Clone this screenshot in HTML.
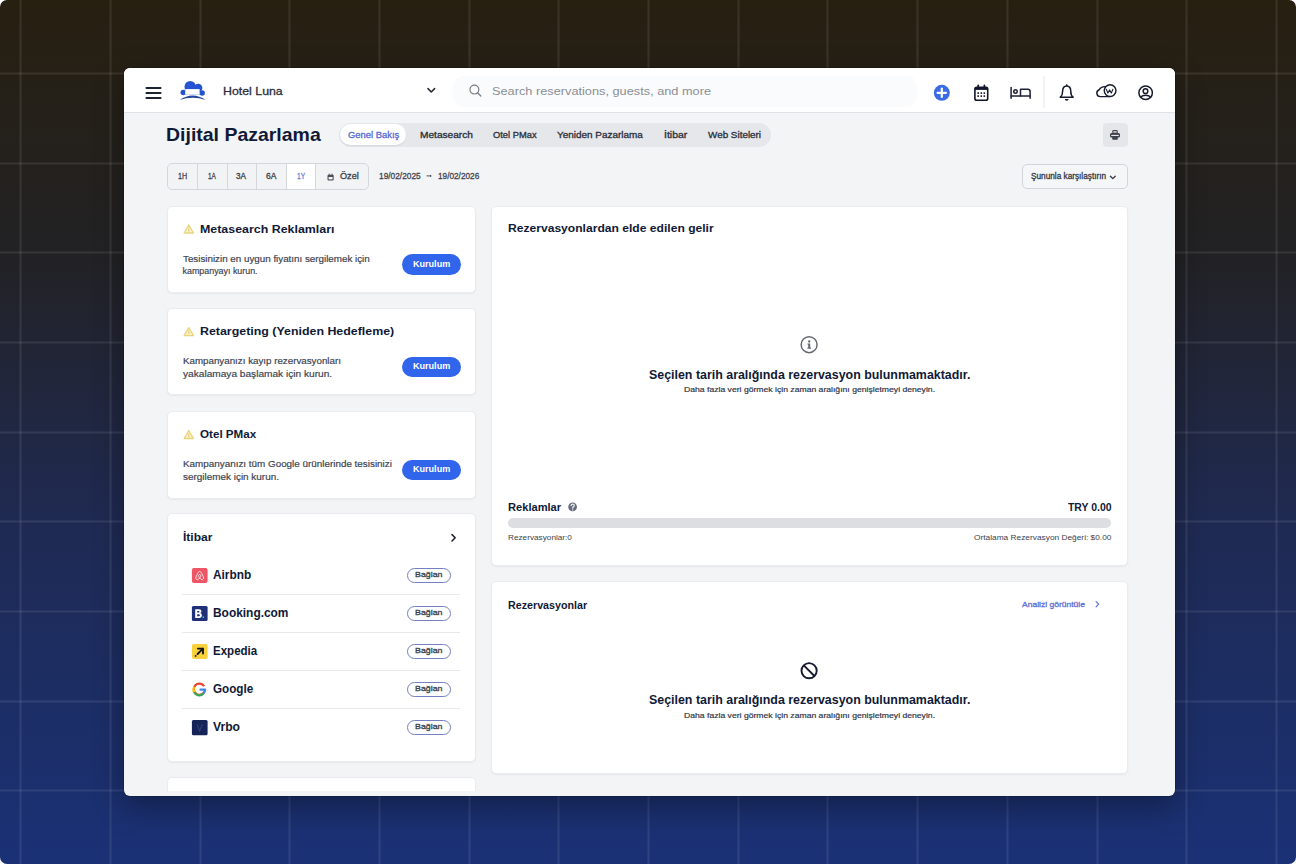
<!DOCTYPE html>
<html><head><meta charset="utf-8">
<style>
*{margin:0;padding:0;box-sizing:border-box}
html,body{width:1296px;height:864px;background:#fff;overflow:hidden}
body{font-family:"Liberation Sans",sans-serif;position:relative}
#bg{position:absolute;left:0;top:0;width:1296px;height:864px;border-radius:7px;overflow:hidden;
 background:linear-gradient(180deg,#271f10 0%,#222225 30%,#1f2a52 60%,#1a3176 100%)}
.gh{position:absolute;left:0;width:1296px;height:3px;background:linear-gradient(180deg,rgba(255,255,255,.025),rgba(255,255,255,.09) 50%,rgba(255,255,255,.025))}
.gv{position:absolute;top:0;height:864px;width:3px;background:linear-gradient(90deg,rgba(255,255,255,.025),rgba(255,255,255,.09) 50%,rgba(255,255,255,.025))}
#win{position:absolute;left:124px;top:68px;width:1051px;height:728px;border-radius:6px;overflow:hidden;background:#f3f4f6;
 box-shadow:0 0 0 1px rgba(0,0,0,.15),0 10px 30px rgba(0,0,0,.35)}
#L{position:absolute;left:-124px;top:-68px;width:1296px;height:864px}
.a{position:absolute}
.t{position:absolute;line-height:0;white-space:nowrap;transform-origin:0 0}
.card{position:absolute;background:#fff;border:1px solid #e9ebee;border-radius:5px;box-shadow:0 1px 2px rgba(0,0,0,.05)}
.kur{position:absolute;background:#3165ec;border-radius:11px;width:58.5px;height:20.5px;left:402px}
.bag{position:absolute;left:406.5px;width:44px;height:15.2px;border:1.25px solid #7480c2;border-radius:8px;background:#fff}
.div{position:absolute;left:182px;width:278px;height:1px;background:#e8e9ec}
svg{position:absolute;overflow:visible}
</style></head><body>
<div id="bg">
<div class="gh" style="top:72.10px"></div>
<div class="gh" style="top:161.75px"></div>
<div class="gh" style="top:251.40px"></div>
<div class="gh" style="top:341.05px"></div>
<div class="gh" style="top:430.70px"></div>
<div class="gh" style="top:520.35px"></div>
<div class="gh" style="top:610.00px"></div>
<div class="gh" style="top:699.65px"></div>
<div class="gh" style="top:789.30px"></div>
<div class="gv" style="left:19.10px"></div>
<div class="gv" style="left:108.80px"></div>
<div class="gv" style="left:198.50px"></div>
<div class="gv" style="left:288.20px"></div>
<div class="gv" style="left:377.90px"></div>
<div class="gv" style="left:467.60px"></div>
<div class="gv" style="left:557.30px"></div>
<div class="gv" style="left:647.00px"></div>
<div class="gv" style="left:736.70px"></div>
<div class="gv" style="left:826.40px"></div>
<div class="gv" style="left:916.10px"></div>
<div class="gv" style="left:1005.80px"></div>
<div class="gv" style="left:1095.50px"></div>
<div class="gv" style="left:1185.20px"></div>
<div class="gv" style="left:1274.90px"></div><div id="win"><div id="L">
<!-- header -->
<div class="a" style="left:124px;top:68px;width:1051px;height:45px;background:#fff;border-bottom:1px solid #dfe1e5"></div>
<svg style="left:0;top:0" width="1" height="1">
 <g stroke="#1d2233" stroke-width="2.1" stroke-linecap="round">
  <line x1="146.5" y1="88" x2="160.5" y2="88"/><line x1="146.5" y1="93" x2="160.5" y2="93"/><line x1="146.5" y1="98" x2="160.5" y2="98"/>
 </g>
 <!-- logo -->
 <g fill="#2553d2">
  <circle cx="190.2" cy="86.5" r="5.6"/><circle cx="198.2" cy="88" r="4.2"/>
  <circle cx="183.2" cy="92.5" r="2.7"/><circle cx="202.2" cy="93" r="2.7"/>
  <rect x="184.8" y="86" width="15" height="9"/>
 </g>
 <rect x="185.2" y="89.1" width="14.4" height="5.7" fill="#fff"/>
 <path d="M179.6 99.9 Q192.7 90.9 205.8 99.9 Q192.7 95.6 179.6 99.9Z" fill="#27489e"/>
 <!-- chevron -->
 <polyline points="428,88.6 431.3,92 434.6,88.6" fill="none" stroke="#2a2d36" stroke-width="1.6" stroke-linecap="round" stroke-linejoin="round"/>
</svg>
<div class="a" style="left:453px;top:76px;width:464px;height:31px;border-radius:11px;background:#fafbfc"></div>
<svg style="left:0;top:0" width="1" height="1">
 <circle cx="474.4" cy="89.6" r="4.4" fill="none" stroke="#7a7d85" stroke-width="1.2"/>
 <line x1="477.6" y1="92.8" x2="480.8" y2="96" stroke="#7a7d85" stroke-width="1.3" stroke-linecap="round"/>
 <!-- plus -->
 <circle cx="941.8" cy="92.8" r="8" fill="#3a6ce8"/>
 <g stroke="#fff" stroke-width="2.2" stroke-linecap="round"><line x1="937.6" y1="92.8" x2="946" y2="92.8"/><line x1="941.8" y1="88.6" x2="941.8" y2="97"/></g>
 <!-- calendar -->
 <g fill="none" stroke="#11152b" stroke-width="1.6">
  <rect x="974.9" y="87.3" width="12.8" height="12.9" rx="1.8"/>
 </g>
 <rect x="974.9" y="87.3" width="12.8" height="2.6" fill="#11152b"/>
 <g stroke="#11152b" stroke-width="1.6" stroke-linecap="round"><line x1="978.2" y1="85.3" x2="978.2" y2="88"/><line x1="984.4" y1="85.3" x2="984.4" y2="88"/></g>
 <g fill="#11152b">
  <rect x="977.4" y="92.3" width="1.6" height="1.6"/><rect x="980.5" y="92.3" width="1.6" height="1.6"/><rect x="983.5" y="92.3" width="1.6" height="1.6"/>
  <rect x="977.4" y="95.3" width="1.6" height="1.6"/><rect x="980.5" y="95.3" width="1.6" height="1.6"/><rect x="983.5" y="95.3" width="1.6" height="1.6"/>
 </g>
 <!-- bed -->
 <g fill="none" stroke="#1d2135" stroke-width="1.5" stroke-linecap="round" stroke-linejoin="round">
  <line x1="1011.1" y1="87.5" x2="1011.1" y2="98.3"/>
  <line x1="1011.1" y1="96.1" x2="1030.1" y2="96.1"/>
  <path d="M1030.1 98.3 V91.6 Q1030.1 89.3 1027.8 89.3 H1020.5 V96.1"/>
  <circle cx="1015.5" cy="91.5" r="1.75"/>
 </g>
 <line x1="1044" y1="76" x2="1044" y2="108" stroke="#e6e7ea" stroke-width="1"/>
 <!-- bell -->
 <path d="M1060.3 97.2 Q1062.6 95.4 1062.6 91.4 Q1062.6 85.9 1066.7 85.9 Q1070.8 85.9 1070.8 91.4 Q1070.8 95.4 1073.1 97.2 Z" fill="none" stroke="#151a2c" stroke-width="1.5" stroke-linejoin="round"/>
 <circle cx="1066.7" cy="85.2" r="0.9" fill="#151a2c"/>
 <path d="M1064.8 99.1 H1068.6 A1.9 1.7 0 0 1 1064.8 99.1Z" fill="#151a2c"/>
 <!-- cloud W -->
 <g fill="none" stroke="#151a2c" stroke-width="1.45" stroke-linejoin="round" stroke-linecap="round">
  <path d="M1110 96.6 H1100.2 A3.5 3.5 0 0 1 1099.2 89.8 Q1100.6 86.8 1105.1 86.6"/>
  <circle cx="1110.1" cy="90.6" r="5.85"/>
  <path d="M1106.3 89.3 L1107.9 93.1 L1109.6 89.9 L1111.3 93.1 L1112.9 89.3" stroke-width="1.1"/>
 </g>
 <!-- user -->
 <g fill="none" stroke="#151a2c" stroke-width="1.5">
  <circle cx="1145.65" cy="92.75" r="6.75"/>
  <circle cx="1145.5" cy="91.15" r="2.3"/>
  <path d="M1140.3 97.9 Q1141.8 95.3 1145.6 95.3 Q1149.4 95.3 1150.9 97.9"/>
 </g>
</svg>
<!-- tabs -->
<div class="a" style="left:338.5px;top:122.5px;width:432px;height:24px;border-radius:12px;background:#e5e7eb"></div>
<div class="a" style="left:339.7px;top:124.4px;width:66.8px;height:21px;border-radius:10.5px;background:#fff;box-shadow:0 1px 2px rgba(0,0,0,.08)"></div>
<!-- print -->
<div class="a" style="left:1102.7px;top:122.7px;width:25.2px;height:24.6px;border-radius:4px;background:#e4e6ea"></div>
<svg style="left:0;top:0" width="1" height="1">
 <g fill="#3d414d">
  <rect x="1112.3" y="130" width="5.4" height="4" rx="1.2"/>
  <rect x="1110" y="133" width="10" height="4.6" rx="1.5"/>
  <rect x="1112.2" y="136" width="5.6" height="3.7" rx="0.8"/>
 </g>
 <rect x="1111.2" y="134.9" width="7.6" height="1.1" fill="#e4e6ea"/>
 <rect x="1113.3" y="131.2" width="3.4" height="1.4" fill="#e4e6ea"/>
</svg>
<!-- period group -->
<div class="a" style="left:166.8px;top:163.2px;width:201.8px;height:26.6px;border:1px solid #d3d6db;border-radius:5px;background:#f2f3f5;overflow:hidden">
 <div class="a" style="left:118.5px;top:0;width:29px;height:25px;background:#fff"></div>
 <div class="a" style="left:29.6px;top:0;width:1px;height:25px;background:#d3d6db"></div>
 <div class="a" style="left:59.6px;top:0;width:1px;height:25px;background:#d3d6db"></div>
 <div class="a" style="left:88.6px;top:0;width:1px;height:25px;background:#d3d6db"></div>
 <div class="a" style="left:118.4px;top:0;width:1px;height:25px;background:#d3d6db"></div>
 <div class="a" style="left:147.6px;top:0;width:1px;height:25px;background:#d3d6db"></div>
</div>
<svg style="left:0;top:0" width="1" height="1">
 <rect x="327.5" y="174.8" width="6.2" height="5.7" rx="1" fill="#4a4e5a"/>
 <rect x="328.6" y="177" width="4" height="2.4" fill="#f2f3f5"/>
 <g stroke="#4a4e5a" stroke-width="0.9"><line x1="329.2" y1="173.6" x2="329.2" y2="175.2"/><line x1="332" y1="173.6" x2="332" y2="175.2"/></g>
 <!-- arrow -->
 <g stroke="#3f434e" stroke-width="0.9" fill="#3f434e"><line x1="426.5" y1="175.9" x2="430.8" y2="175.9"/><path d="M430 174.8 L431.8 175.9 L430 177Z" stroke="none"/></g>
</svg>
<!-- compare -->
<div class="a" style="left:1022.2px;top:164.4px;width:105.6px;height:25px;border:1px solid #d2d5da;border-radius:5px;background:#f5f6f7"></div>
<svg style="left:0;top:0" width="1" height="1">
 <polyline points="1110.4,176.2 1112.8,178.6 1115.2,176.2" fill="none" stroke="#333745" stroke-width="1.3" stroke-linecap="round" stroke-linejoin="round"/>
</svg>
<!-- left cards -->
<div class="card" style="left:167px;top:206px;width:309px;height:87px"></div>
<div class="card" style="left:167px;top:308px;width:309px;height:87px"></div>
<div class="card" style="left:167px;top:411px;width:309px;height:88px"></div>
<div class="card" style="left:167px;top:513px;width:309px;height:249px"></div>
<div class="card" style="left:167px;top:777px;width:309px;height:14px;border-bottom:none;border-radius:5px 5px 0 0;box-shadow:none"></div>
<div class="kur" style="top:254.3px"></div>
<div class="kur" style="top:356.6px"></div>
<div class="kur" style="top:459.6px"></div>
<svg style="left:0;top:0" width="1" height="1">
 <g id="warn">
 <path d="M188.8 225 L193.5 233 H184.1 Z" fill="#fbf5c6" stroke="#e8d47e" stroke-width="1.3" stroke-linejoin="round"/>
 <line x1="188.8" y1="228" x2="188.8" y2="231.6" stroke="#e6bf78" stroke-width="1"/>
 </g>
 <use href="#warn" y="102.6"/>
 <use href="#warn" y="205.5"/>
 <!-- itibar chevron -->
 <polyline points="452,534.6 455.2,537.8 452,541" fill="none" stroke="#1a1f30" stroke-width="1.5" stroke-linecap="round" stroke-linejoin="round"/>
</svg>
<div class="div" style="top:594.3px"></div>
<div class="div" style="top:632.3px"></div>
<div class="div" style="top:670.3px"></div>
<div class="div" style="top:708.3px"></div>
<div class="bag" style="top:567.9px"></div>
<div class="bag" style="top:605.9px"></div>
<div class="bag" style="top:644px"></div>
<div class="bag" style="top:682px"></div>
<div class="bag" style="top:720.1px"></div>
<svg style="left:0;top:0" width="1" height="1">
 <!-- airbnb -->
 <rect x="191.9" y="568.1" width="15.7" height="14.9" rx="2" fill="#ee5565"/>
 <path d="M199.7 571.5 C198.7 571.5 198.1 572.5 197.5 573.7 L196 576.9 C195.3 578.5 196.3 579.8 197.5 579.6 C198.4 579.5 199.1 578.8 199.7 578 C200.3 578.8 201 579.5 201.9 579.6 C203.1 579.8 204.1 578.5 203.4 576.9 L201.9 573.7 C201.3 572.5 200.7 571.5 199.7 571.5Z M199.7 578 C198.9 577 198.4 576 198.6 575.2 C198.8 574.3 200.6 574.3 200.8 575.2 C201 576 200.5 577 199.7 578Z" fill="none" stroke="#fde3e6" stroke-width="0.9"/>
 <!-- booking -->
 <rect x="191.9" y="606.1" width="15.7" height="14.9" rx="1.5" fill="#1f3079"/>
 <path d="M195.2 609.2 H198.9 Q201.5 609.2 201.5 611.3 Q201.5 612.6 200.3 613.1 Q201.9 613.6 201.9 615.3 Q201.9 617.9 198.9 617.9 H195.2Z M197.2 610.9 V612.6 H198.6 Q199.5 612.6 199.5 611.75 Q199.5 610.9 198.6 610.9Z M197.2 614.2 V616.2 H198.8 Q199.9 616.2 199.9 615.2 Q199.9 614.2 198.8 614.2Z" fill="#fff" fill-rule="evenodd"/>
 <circle cx="203.3" cy="617.2" r="0.9" fill="#46a7f5"/>
 <!-- expedia -->
 <rect x="191.9" y="644.1" width="15.7" height="14.9" rx="2" fill="#f8d13a"/>
 <g stroke="#14161f" stroke-width="1.9" stroke-linecap="round" stroke-linejoin="round" fill="none"><line x1="197.6" y1="654" x2="202.9" y2="648.7"/><polyline points="197.9,648.6 203,648.6 203,653.6"/></g>
 <circle cx="195.6" cy="655.9" r="0.95" fill="#14161f"/>
 <!-- google -->
 <g fill="none" stroke-width="2.2">
  <path d="M204.2 686.3 A5.6 5.6 0 1 0 204.9 690.2" stroke="#ea4335"/>
  <path d="M194.3 686.8 A5.6 5.6 0 0 0 194.2 692.3" stroke="#fbbc05"/>
  <path d="M194.2 692.3 A5.6 5.6 0 0 0 203.4 693.6" stroke="#34a853"/>
  <path d="M203.4 693.6 A5.6 5.6 0 0 0 204.9 689.6 H199.6" stroke="#4285f4"/>
 </g>
 <!-- vrbo -->
 <rect x="191.9" y="720" width="15.7" height="15.3" rx="1.5" fill="#142458"/>
 <path d="M197.2 724.6 L199.6 731 L202.4 724.2" fill="none" stroke="#33427a" stroke-width="1.1"/>
</svg>
<!-- right cards -->
<div class="card" style="left:491px;top:206px;width:637px;height:360px"></div>
<div class="card" style="left:491px;top:581px;width:637px;height:193px"></div>
<div class="a" style="left:507.8px;top:517.5px;width:603.4px;height:10.2px;border-radius:5.1px;background:#dcdee2"></div>
<svg style="left:0;top:0" width="1" height="1">
 <!-- info -->
 <circle cx="809.1" cy="344.7" r="7.95" fill="none" stroke="#63666e" stroke-width="1.45"/>
 <circle cx="809.2" cy="341.5" r="1.15" fill="#63666e"/>
 <path d="M807.6 343.6 H810.2 V347.6 H811 V348.8 H807.4 V347.6 H808.2 V344.8 H807.6Z" fill="#63666e"/>
 <!-- question -->
 <circle cx="572.6" cy="506.9" r="4.35" fill="#656a78"/>
 <path d="M571.1 505.7 Q571.1 504.2 572.7 504.2 Q574.3 504.2 574.3 505.6 Q574.3 506.5 573.4 506.9 Q572.7 507.3 572.7 508.2" fill="none" stroke="#eef0f6" stroke-width="1.25" stroke-linecap="round"/>
 <circle cx="572.7" cy="509.9" r="0.7" fill="#eef0f6"/>
 <!-- analizi chevron -->
 <polyline points="1096.1,601.6 1098.6,604.2 1096.1,606.8" fill="none" stroke="#5d6fd6" stroke-width="1.2" stroke-linecap="round" stroke-linejoin="round"/>
 <!-- ban -->
 <circle cx="809.1" cy="670.7" r="7.6" fill="none" stroke="#141a30" stroke-width="1.9"/>
 <line x1="803.8" y1="665.4" x2="814.4" y2="676" stroke="#141a30" stroke-width="1.9"/>
</svg>
<div class="t" style="left:222.80px;top:90.91px;font-size:11.8px;font-weight:400;color:#2b2e3a;transform:scaleX(1.0470);-webkit-text-stroke:0.3px currentColor;">Hotel Luna</div>
<div class="t" style="left:492.00px;top:91.01px;font-size:11.8px;font-weight:400;color:#8b8e96;transform:scaleX(1.0810);">Search reservations, guests, and more</div>
<div class="t" style="left:165.71px;top:135.04px;font-size:17.9px;font-weight:700;color:#101936;transform:scaleX(1.0882);">Dijital Pazarlama</div>
<div class="t" style="left:347.70px;top:134.56px;font-size:9.2px;font-weight:400;color:#5468d4;transform:scaleX(1.0247);-webkit-text-stroke:0.3px currentColor;">Genel Bakış</div>
<div class="t" style="left:419.50px;top:134.56px;font-size:9.2px;font-weight:400;color:#2a2d38;transform:scaleX(1.1025);-webkit-text-stroke:0.3px currentColor;">Metasearch</div>
<div class="t" style="left:492.80px;top:134.56px;font-size:9.2px;font-weight:400;color:#2a2d38;transform:scaleX(1.0163);-webkit-text-stroke:0.3px currentColor;">Otel PMax</div>
<div class="t" style="left:557.00px;top:134.56px;font-size:9.2px;font-weight:400;color:#2a2d38;transform:scaleX(1.0819);-webkit-text-stroke:0.3px currentColor;">Yeniden Pazarlama</div>
<div class="t" style="left:664.00px;top:134.56px;font-size:9.2px;font-weight:400;color:#2a2d38;transform:scaleX(1.1392);-webkit-text-stroke:0.3px currentColor;">İtibar</div>
<div class="t" style="left:707.50px;top:134.56px;font-size:9.2px;font-weight:400;color:#2a2d38;transform:scaleX(1.0746);-webkit-text-stroke:0.3px currentColor;">Web Siteleri</div>
<div class="t" style="left:177.60px;top:176.11px;font-size:9.2px;font-weight:400;color:#3a3d48;transform:scaleX(0.7741);-webkit-text-stroke:0.3px currentColor;">1H</div>
<div class="t" style="left:208.00px;top:176.11px;font-size:9.2px;font-weight:400;color:#3a3d48;transform:scaleX(0.7019);-webkit-text-stroke:0.3px currentColor;">1A</div>
<div class="t" style="left:236.20px;top:176.11px;font-size:9.2px;font-weight:400;color:#3a3d48;transform:scaleX(0.8919);-webkit-text-stroke:0.3px currentColor;">3A</div>
<div class="t" style="left:265.80px;top:176.11px;font-size:9.2px;font-weight:400;color:#3a3d48;transform:scaleX(0.9249);-webkit-text-stroke:0.3px currentColor;">6A</div>
<div class="t" style="left:297.40px;top:176.11px;font-size:9.2px;font-weight:400;color:#6b7fd8;transform:scaleX(0.7291);-webkit-text-stroke:0.3px currentColor;">1Y</div>
<div class="t" style="left:340.30px;top:176.11px;font-size:9.2px;font-weight:400;color:#3a3d48;transform:scaleX(0.9921);-webkit-text-stroke:0.3px currentColor;">Özel</div>
<div class="t" style="left:378.80px;top:175.68px;font-size:9.0px;font-weight:400;color:#3f434e;transform:scaleX(0.9259);-webkit-text-stroke:0.3px currentColor;">19/02/2025</div>
<div class="t" style="left:437.60px;top:175.68px;font-size:9.0px;font-weight:400;color:#3f434e;transform:scaleX(0.9148);-webkit-text-stroke:0.3px currentColor;">19/02/2026</div>
<div class="t" style="left:1030.90px;top:176.12px;font-size:8.6px;font-weight:400;color:#333745;transform:scaleX(0.9585);-webkit-text-stroke:0.3px currentColor;">Şununla karşılaştırın</div>
<div class="t" style="left:199.80px;top:228.63px;font-size:11.6px;font-weight:700;color:#101936;transform:scaleX(1.0698);">Metasearch Reklamları</div>
<div class="t" style="left:182.60px;top:259.06px;font-size:8.9px;font-weight:400;color:#40444f;transform:scaleX(1.1036);-webkit-text-stroke:0.18px currentColor;">Tesisinizin en uygun fiyatını sergilemek için</div>
<div class="t" style="left:182.60px;top:271.46px;font-size:8.9px;font-weight:400;color:#40444f;transform:scaleX(1.0000);-webkit-text-stroke:0.18px currentColor;">kampanyayı kurun.</div>
<div class="t" style="left:413.00px;top:264.03px;font-size:9.0px;font-weight:700;color:#ffffff;transform:scaleX(1.0055);">Kurulum</div>
<div class="t" style="left:199.80px;top:330.88px;font-size:11.6px;font-weight:700;color:#101936;transform:scaleX(1.0692);">Retargeting (Yeniden Hedefleme)</div>
<div class="t" style="left:182.60px;top:361.31px;font-size:8.9px;font-weight:400;color:#40444f;transform:scaleX(1.1001);-webkit-text-stroke:0.18px currentColor;">Kampanyanızı kayıp rezervasyonları</div>
<div class="t" style="left:182.60px;top:373.71px;font-size:8.9px;font-weight:400;color:#40444f;transform:scaleX(1.1408);-webkit-text-stroke:0.18px currentColor;">yakalamaya başlamak için kurun.</div>
<div class="t" style="left:413.00px;top:366.28px;font-size:9.0px;font-weight:700;color:#ffffff;transform:scaleX(1.0055);">Kurulum</div>
<div class="t" style="left:199.80px;top:433.88px;font-size:11.6px;font-weight:700;color:#101936;transform:scaleX(1.0034);">Otel PMax</div>
<div class="t" style="left:182.60px;top:464.31px;font-size:8.9px;font-weight:400;color:#40444f;transform:scaleX(1.1113);-webkit-text-stroke:0.18px currentColor;">Kampanyanızı tüm Google ürünlerinde tesisinizi</div>
<div class="t" style="left:182.60px;top:476.71px;font-size:8.9px;font-weight:400;color:#40444f;transform:scaleX(1.1176);-webkit-text-stroke:0.18px currentColor;">sergilemek için kurun.</div>
<div class="t" style="left:413.00px;top:469.28px;font-size:9.0px;font-weight:700;color:#ffffff;transform:scaleX(1.0055);">Kurulum</div>
<div class="t" style="left:182.50px;top:537.19px;font-size:11.0px;font-weight:700;color:#101936;transform:scaleX(1.0937);">İtibar</div>
<div class="t" style="left:213.00px;top:574.94px;font-size:12.0px;font-weight:700;color:#101936;transform:scaleX(0.9888);">Airbnb</div>
<div class="t" style="left:414.90px;top:574.86px;font-size:7.9px;font-weight:400;color:#3a3f4e;transform:scaleX(1.1166);-webkit-text-stroke:0.3px currentColor;">Bağlan</div>
<div class="t" style="left:213.00px;top:612.99px;font-size:12.0px;font-weight:700;color:#101936;transform:scaleX(0.9929);">Booking.com</div>
<div class="t" style="left:414.90px;top:612.91px;font-size:7.9px;font-weight:400;color:#3a3f4e;transform:scaleX(1.1166);-webkit-text-stroke:0.3px currentColor;">Bağlan</div>
<div class="t" style="left:213.00px;top:651.04px;font-size:12.0px;font-weight:700;color:#101936;transform:scaleX(0.9602);">Expedia</div>
<div class="t" style="left:414.90px;top:650.96px;font-size:7.9px;font-weight:400;color:#3a3f4e;transform:scaleX(1.1166);-webkit-text-stroke:0.3px currentColor;">Bağlan</div>
<div class="t" style="left:213.00px;top:689.09px;font-size:12.0px;font-weight:700;color:#101936;transform:scaleX(0.9722);">Google</div>
<div class="t" style="left:414.90px;top:689.01px;font-size:7.9px;font-weight:400;color:#3a3f4e;transform:scaleX(1.1166);-webkit-text-stroke:0.3px currentColor;">Bağlan</div>
<div class="t" style="left:213.00px;top:727.14px;font-size:12.0px;font-weight:700;color:#101936;transform:scaleX(1.0136);">Vrbo</div>
<div class="t" style="left:414.90px;top:727.06px;font-size:7.9px;font-weight:400;color:#3a3f4e;transform:scaleX(1.1166);-webkit-text-stroke:0.3px currentColor;">Bağlan</div>
<div class="t" style="left:507.90px;top:228.05px;font-size:11.4px;font-weight:700;color:#101936;transform:scaleX(1.0618);">Rezervasyonlardan elde edilen gelir</div>
<div class="t" style="left:648.80px;top:375.14px;font-size:12.0px;font-weight:700;color:#101936;transform:scaleX(1.0340);">Seçilen tarih aralığında rezervasyon bulunmamaktadır.</div>
<div class="t" style="left:684.00px;top:389.87px;font-size:7.6px;font-weight:400;color:#2d3245;transform:scaleX(1.1350);-webkit-text-stroke:0.18px currentColor;">Daha fazla veri görmek için zaman aralığını genişletmeyi deneyin.</div>
<div class="t" style="left:507.80px;top:507.22px;font-size:10.6px;font-weight:700;color:#101936;transform:scaleX(1.0490);">Reklamlar</div>
<div class="t" style="left:1067.70px;top:507.22px;font-size:10.6px;font-weight:700;color:#101936;transform:scaleX(0.9851);">TRY 0.00</div>
<div class="t" style="left:507.80px;top:538.37px;font-size:7.6px;font-weight:400;color:#3a3f4e;transform:scaleX(1.0821);">Rezervasyonlar:0</div>
<div class="t" style="left:974.30px;top:538.37px;font-size:7.6px;font-weight:400;color:#3a3f4e;transform:scaleX(1.0964);">Ortalama Rezervasyon Değeri: $0.00</div>
<div class="t" style="left:507.80px;top:604.92px;font-size:10.6px;font-weight:700;color:#101936;transform:scaleX(1.0103);">Rezervasyonlar</div>
<div class="t" style="left:1022.40px;top:604.86px;font-size:7.9px;font-weight:400;color:#5d6fd6;transform:scaleX(1.0789);-webkit-text-stroke:0.3px currentColor;">Analizi görüntüle</div>
<div class="t" style="left:648.80px;top:700.04px;font-size:12.0px;font-weight:700;color:#101936;transform:scaleX(1.0340);">Seçilen tarih aralığında rezervasyon bulunmamaktadır.</div>
<div class="t" style="left:684.00px;top:716.07px;font-size:7.6px;font-weight:400;color:#2d3245;transform:scaleX(1.1350);-webkit-text-stroke:0.18px currentColor;">Daha fazla veri görmek için zaman aralığını genişletmeyi deneyin.</div>
</div></div>
</div>
</body></html>
